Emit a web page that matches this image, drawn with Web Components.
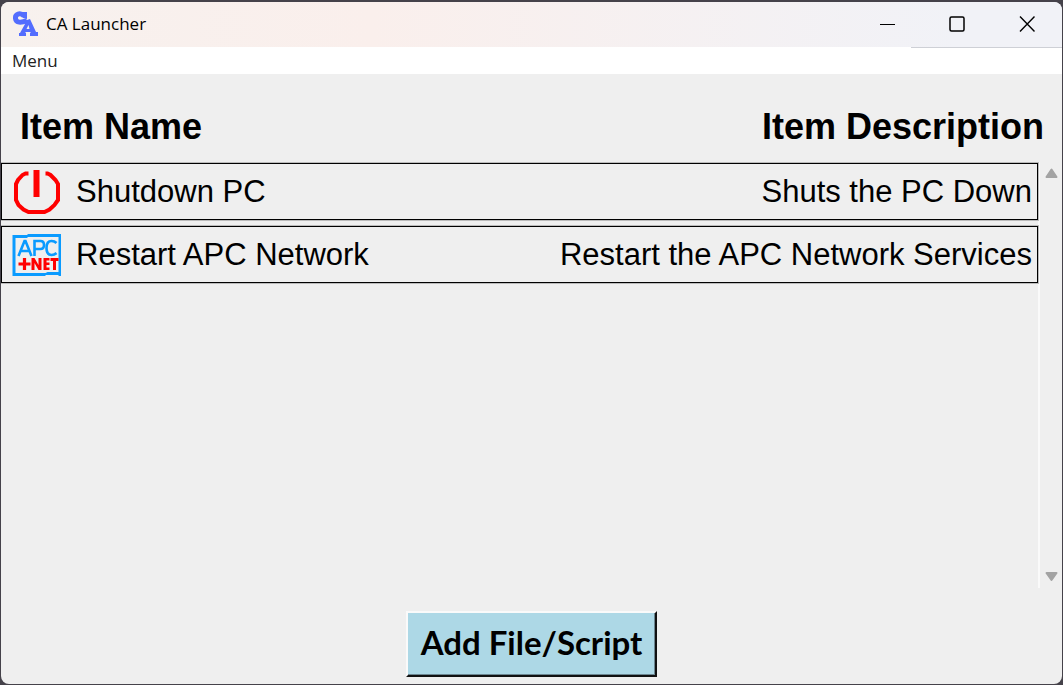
<!DOCTYPE html>
<html lang="en">
<head>
<meta charset="utf-8">
<title>CA Launcher</title>
<style>
  html { height: 100%; }
  body { margin: 0; min-height: 100%; display: flex; font-family: "Liberation Sans", Arial, sans-serif; color: #000; background: #45424a; }
  launcher-window { flex: 1; }
</style>
</head>
<body>
<launcher-window>
  <title-bar slot="title">CA Launcher</title-bar>
  <menu-bar slot="menu">Menu</menu-bar>
  <column-headings slot="headings"><span slot="name">Item Name</span><span slot="description">Item Description</span></column-headings>
  <item-list slot="content">
    <launcher-item icon="power">Shutdown PC<span slot="description">Shuts the PC Down</span></launcher-item>
    <launcher-item icon="network">Restart APC Network<span slot="description">Restart the APC Network Services</span></launcher-item>
  </item-list>
  <add-button slot="footer">Add File/Script</add-button>
</launcher-window>
<script>
function define(name, html, setup) {
  customElements.define(name, class extends HTMLElement {
    constructor() {
      super();
      const t = document.createElement('template');
      t.innerHTML = html;
      this.attachShadow({ mode: 'open' }).append(t.content.cloneNode(true));
      if (setup) setup(this, this.shadowRoot);
    }
  });
}

define('launcher-window', `
<style>
  :host { display: flex; box-sizing: border-box; padding: 2px 1px 1px; }
  main { flex: 1; display: flex; flex-direction: column; background: #efefef; border-radius: 8px; overflow: hidden; }
  .content { flex: 1; display: flex; }
  .content ::slotted(*) { flex: 1; }
  footer { display: flex; justify-content: center; padding: 23px 0 7px; }
</style>
<main>
  <slot name="title"></slot><slot name="menu"></slot><slot name="headings"></slot>
  <div class="content"><slot name="content"></slot></div>
  <footer><slot name="footer"></slot></footer>
</main>`);

define('title-bar', `
<style>
  :host { display: flex; align-items: center; height: 45px; padding-left: 11px; font-family: "Open Sans", sans-serif; font-size: 17px;
    background: linear-gradient(90deg, #f7f1ee, #faefec 35%, #f1f2f7 90%); }
  .logo { width: 26px; height: 26px; margin: 0 8px 2px 0; }
  .title { flex: 1; padding-bottom: 2px; }
  button { width: 70px; height: 43px; margin-bottom: 2px; padding: 0; border: 0; background: none; display: grid; place-items: center; }
</style>
<svg class="logo" viewBox="0 0 26 26" aria-hidden="true">
  <path d="M12 5 C8 1 3 3 3.500 7.500 C4 12 9 12 15 9.500" fill="none" stroke="#536dfe" stroke-width="5"/>
  <path d="M9 1h6v7l-4-1z M12 10l6-2l6 13h2v4h-8v-3h1l-1-1h-4l-1 1h1v3H7v-3h1l5-9z M14.500 18h3l-1-4z" fill="#536dfe" fill-rule="evenodd"/>
</svg>
<span class="title"><slot></slot></span>
<button aria-label="Minimize"><svg width="16" height="16"><path d="M1 8.500h15" stroke="#000"/></svg></button>
<button aria-label="Maximize"><svg width="16" height="16"><rect x="1" y="1" width="14" height="14" rx="1.500" fill="none" stroke="#000" stroke-width="1.500"/></svg></button>
<button aria-label="Close"><svg width="16" height="16"><path d="M1 .5l14.500 15M15.500.5L1 15.500" stroke="#000" stroke-width="1.400"/></svg></button>`);

define('menu-bar', `
<style>
  :host { display: flex; height: 27px; background: linear-gradient(#ced0d6, #ced0d6) right top / 151px 1px no-repeat #fff; font-family: "Open Sans", sans-serif; }
  button { font: inherit; font-size: 17px; line-height: 28px; padding: 0 11px; border: 0; background: none; color: #222; }
</style>
<button><slot></slot></button>`);

define('column-headings', `
<style>
  :host { display: flex; justify-content: space-between; padding: 33px 18px 15px 19px; font-size: 36px; line-height: 40px; font-weight: bold; }
</style>
<slot name="name"></slot><slot name="description"></slot>`);

define('item-list', `
<style>
  :host { display: flex; }
  .items { flex: 1; display: flex; flex-direction: column; gap: 6px; padding-top: 1px; border-right: 2px solid #fafafa; }
  .scroll { width: 22px; display: flex; flex-direction: column; justify-content: space-between; align-items: center; padding: 6px 0; box-sizing: border-box; }
</style>
<div class="items" role="list"><slot></slot></div>
<div class="scroll" aria-hidden="true">
  <svg width="14" height="10"><path d="M7.500 1.500L12.500 9H2.500z" fill="#a3a3a3" stroke="#a3a3a3" stroke-width="2" stroke-linejoin="round"/></svg>
  <svg width="14" height="10"><path d="M2.500 1H12.500L7.500 8z" fill="#a3a3a3" stroke="#a3a3a3" stroke-width="2" stroke-linejoin="round"/></svg>
</div>`);

const icons = {
  power: `<svg viewBox="0 0 50 50" aria-hidden="true"><path d="M18 6.500H15L12 8L7.500 13L5.500 17V33L8 38L13 42.500L18 45H34L39 42.500L44 38L47.500 33V17L45 13L40 8L37 6.500H35" fill="none" stroke="#f00" stroke-width="4"/><path d="M23 3h6v27h-6z" fill="#f00"/></svg>`,
  network: `<svg viewBox="0 0 50 50" aria-hidden="true">
    <path d="M2 5H17V4H51V7H17V8H2zM48 4h3v42h-3zM2 5h3v41H2zM2 43H35L37 42H51V45H35V46H2z" fill="#0a9bff"/>
    <path d="M8 26L14 11H15L21 26M10 21H19M24 26V11H30Q33.500 11 33.500 15T30 19H24M46 13Q44 11 41 11Q36 11 36 18T41 25Q44 25 46 23" fill="none" stroke="#0a9bff" stroke-width="2.600"/>
    <path d="M8 34H20M14 28V40" fill="none" stroke="#f00" stroke-width="3.200"/>
    <path d="M21 28h3l4 7v-7h3v12h-3l-4-7v7h-3zM33 28h6v2.500h-3v2h3v2.500h-3v2.500h3V40h-6zM40 28h8v3h-2.500v9h-3v-9H40z" fill="#f00"/></svg>`
};

define('launcher-item', `
<style>
  :host { display: block; }
  button { width: 100%; height: 57px; box-sizing: border-box; display: flex; align-items: center; padding: 0 5px 0 8px; border: 1px solid #000; box-shadow: 0 0 0 1px #bbb; background: none; font: inherit; font-size: 31px; color: #000; }
  .icon { display: flex; width: 51px; height: 50px; margin-right: 15px; }
  svg { width: 100%; height: 100%; }
  .name { flex: 1; text-align: left; }
</style>
<button><span class="icon"></span><span class="name"><slot></slot></span><slot name="description"></slot></button>`,
(el, root) => {
  el.setAttribute('role', 'listitem');
  root.querySelector('.icon').innerHTML = icons[el.getAttribute('icon')] || '';
});

define('add-button', `
<style>
  :host { display: block; }
  button { height: 66px; padding: 0 13px 4px; font-family: "Century Gothic", Lato, sans-serif; font-size: 33px; font-weight: 700; color: #000;
    background: #add8e6; border: 2px solid; border-color: #fafafa #111 #111 #fafafa; box-shadow: inset -1px -1px #6c8690; }
</style>
<button><slot></slot></button>`);
</script>
</body>
</html>
